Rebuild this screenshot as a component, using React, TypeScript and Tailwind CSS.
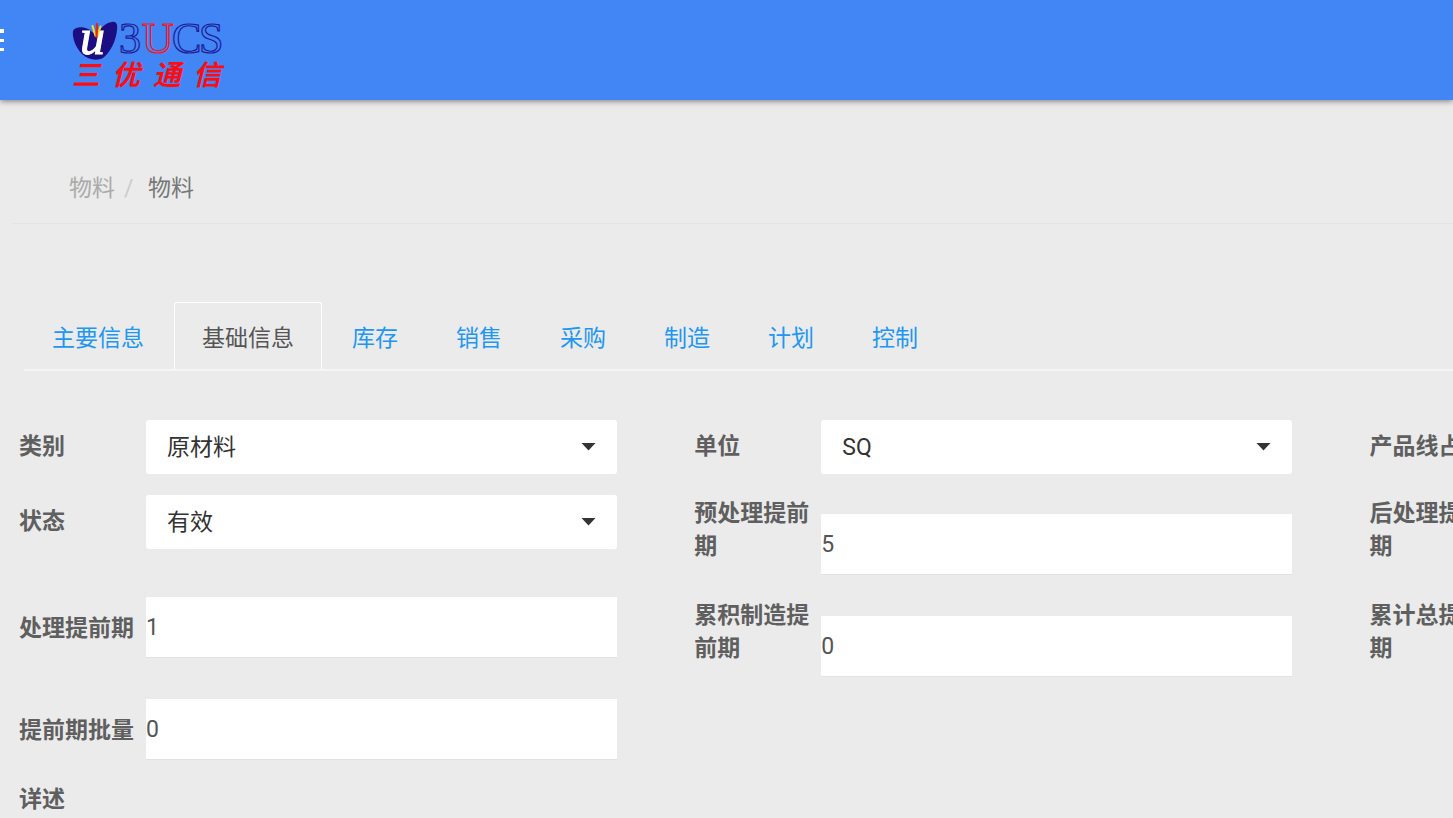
import { useState } from "react";

interface Field {
  id: string;
  label: string;
  type: "select" | "input" | "tall" | "label";
  value?: string;
  options?: string[];
}

const tabs = ["主要信息", "基础信息", "库存", "销售", "采购", "制造", "计划", "控制"];

// one inner array per form row, three columns each
const rows: { height: string; fields: Field[] }[] = [
  {
    height: "min-h-[75px]",
    fields: [
      { id: "category", label: "类别", type: "select", options: ["原材料", "半成品", "成品"] },
      { id: "unit", label: "单位", type: "select", options: ["SQ", "PCS", "KG"] },
      { id: "line", label: "产品线占比", type: "select", options: ["0"] },
    ],
  },
  {
    height: "min-h-[102px]",
    fields: [
      { id: "status", label: "状态", type: "select", options: ["有效", "无效"] },
      { id: "pre_lead", label: "预处理提前期", type: "tall", value: "5" },
      { id: "post_lead", label: "后处理提前期", type: "tall", value: "0" },
    ],
  },
  {
    height: "min-h-[102px]",
    fields: [
      { id: "lead", label: "处理提前期", type: "input", value: "1" },
      { id: "make_lead", label: "累积制造提前期", type: "tall", value: "0" },
      { id: "total_lead", label: "累计总提前期", type: "tall", value: "0" },
    ],
  },
  {
    height: "min-h-[84px]",
    fields: [{ id: "batch", label: "提前期批量", type: "input", value: "0" }],
  },
  {
    height: "min-h-[33px]",
    fields: [{ id: "detail", label: "详述", type: "label" }],
  },
];

const labelPadding = {
  select: "pt-[10px]",
  input: "pt-[15px]",
  tall: "pt-[2px]",
  label: "pt-0",
};

function Logo() {
  return (
    <svg width="152" height="72" viewBox="72 19 152 72" role="img" aria-label="3UCS 三优通信">
      <path
        d="M73 31C75 26 87 26 92 32L97 35C99 29 105 23 112 22C116 21 118 24 117 30C116 41 110 53 103 58C97 61 88 60 82 54C76 48 72 38 73 31Z"
        fill="#1c0d82"
      />
      <text
        x="80"
        y="54"
        fontFamily="Liberation Serif, serif"
        fontStyle="italic"
        fontSize="50"
        fill="#fff"
        stroke="#fff"
        strokeWidth="1"
      >
        u
      </text>
      <g fill="none" strokeLinecap="round">
        <path d="M92.5 26L95.5 36M100.5 26.500L97.500 36" stroke="#f4e11c" strokeWidth="2" />
        <path d="M97 24L96.500 37" stroke="#e8231c" strokeWidth="2.200" />
      </g>
      <g fontFamily="Liberation Serif, serif" fontSize="44" fill="#4285f4" stroke="#1f1a96" strokeWidth="1.2">
        <text x="119" y="53">3</text>
        <text x="142" y="53" stroke="#f5151b">U</text>
        <text x="172" y="53">C</text>
        <text x="199" y="53">S</text>
      </g>
      <g fontFamily="Noto Sans CJK SC, sans-serif" fontStyle="italic" fontWeight="700" fontSize="28" fill="#fb0d12">
        <text x="72" y="85">三</text>
        <text x="112" y="85">优</text>
        <text x="153" y="85">通</text>
        <text x="193" y="85">信</text>
      </g>
    </svg>
  );
}

function FormField({ field }: { field: Field }) {
  return (
    <div className="flex items-start pr-[77px]">
      <label
        htmlFor={field.id}
        className={`w-[127px] shrink-0 pr-2 font-bold text-[#5f5f5f] ${labelPadding[field.type]}`}
      >
        {field.label}
      </label>
      {field.type === "select" && (
        <div className="relative flex-1">
          <select
            id={field.id}
            className="block h-[54px] w-full appearance-none rounded-[3px] bg-white pl-[21px] pr-12 text-[#333]"
          >
            {field.options?.map((option) => (
              <option key={option}>{option}</option>
            ))}
          </select>
          <svg className="pointer-events-none absolute right-[21px] top-[23px]" width="15" height="8" viewBox="0 0 15 8">
            <path d="M0.5 0H14.5L7.5 7.5Z" fill="#333" />
          </svg>
        </div>
      )}
      {(field.type === "input" || field.type === "tall") && (
        <input
          id={field.id}
          type="text"
          defaultValue={field.value}
          className={`block h-[61px] min-w-0 flex-1 border-b border-[#e2e2e2] bg-white text-[#555] ${field.type === "tall" ? "mt-[19px]" : ""}`}
        />
      )}
    </div>
  );
}

export default function App() {
  const [active, setActive] = useState("基础信息");

  return (
    <div className="min-h-screen overflow-hidden bg-[#ebebeb] font-['Roboto','Noto_Sans_CJK_SC',sans-serif] text-[23px] leading-[33px]">
      <header className="flex h-[100px] items-start bg-[#4285f4] shadow-[0_1px_6px_rgba(0,0,0,0.5)]">
        <button type="button" aria-label="菜单" className="-ml-[26px] mt-[29px] flex w-[30px] flex-col gap-[6px]">
          <span className="h-1 w-full bg-white" />
          <span className="h-[3px] w-full bg-white" />
          <span className="h-[3px] w-full bg-white" />
        </button>
        <a href="#" className="ml-[68px] mt-[19px]">
          <Logo />
        </a>
      </header>

      <nav className="ml-3 mt-[72px] flex border-b border-[#e4e4e4] pb-[18px] pl-[57px]">
        <a href="#" className="text-[#aaa]">物料</a>
        <span className="w-[33px] pl-[9px] text-[#ccc]">/</span>
        <span className="text-[#777]">物料</span>
      </nav>

      <div className="ml-6 mt-[78px] flex gap-[2px] border-b-2 border-[#f5f5f5]">
        {tabs.map((tab) => (
          <button
            key={tab}
            type="button"
            onClick={() => setActive(tab)}
            className={`shrink-0 rounded-t-[3px] border border-b-0 px-[27px] pb-[14px] pt-[19px] ${tab === active
              ? "border-white text-[#555]"
              : "border-transparent text-[#2196f3]"
              }`}
          >
            {tab}
          </button>
        ))}
      </div>

      <form className="mt-[49px] w-[141%] pl-[19px] pr-1">
        {rows.map((row, i) => (
          <div key={i} className={`grid grid-cols-3 ${row.height}`}>
            {row.fields.map((field) => (
              <FormField key={field.id} field={field} />
            ))}
          </div>
        ))}
      </form>
    </div>
  );
}
